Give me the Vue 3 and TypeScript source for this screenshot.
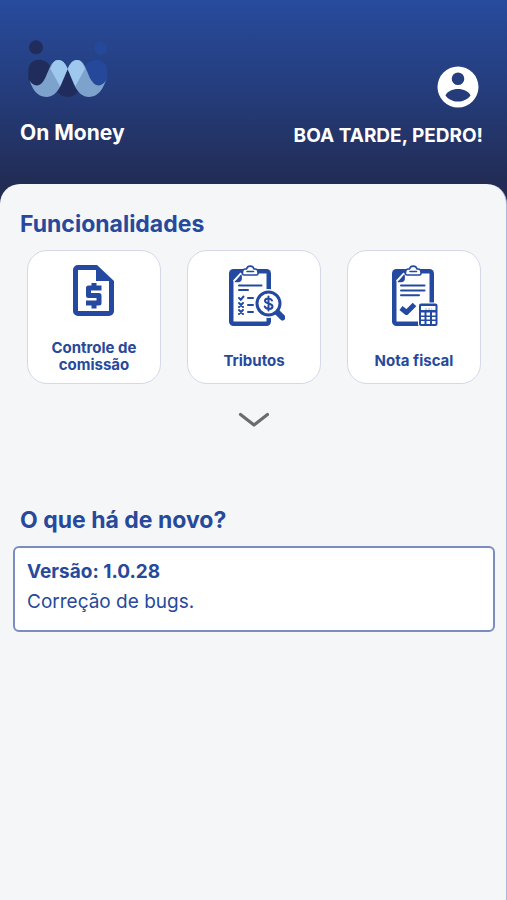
<script setup lang="ts">
interface Feature {
  id: 'commission' | 'taxes' | 'invoice'
  label: string
}

const features: Feature[] = [
  { id: 'commission', label: 'Controle de comissão' },
  { id: 'taxes', label: 'Tributos' },
  { id: 'invoice', label: 'Nota fiscal' },
]

const userName: string = 'PEDRO'
const version: string = '1.0.28'
</script>

<template>
  <div class="app">
    <header class="header">
      <div class="brand">
        <svg class="logo" viewBox="54 30 240 180" aria-hidden="true">
          <circle cx="78" cy="52" r="21" fill="#202d5c" />
          <circle cx="272" cy="54" r="20" fill="#25489a" />
          <path d="M55 150V122C55 102 68 89 87 89C108 89 121 104 130 124C122 142 104 167 83 168C68 168 60 161 55 150Z" fill="#202d5c" />
          <path d="M291 150V122C291 102 278 89 259 89C238 89 225 104 216 124C224 142 242 167 263 168C278 168 286 161 291 150Z" fill="#25489a" />
          <path d="M173 116L204 184C197 196 186 201 173 201S149 196 142 184Z" fill="#202d5c" />
          <path d="M58 151C70 171 87 172 101 152C116 130 120 90 145 90C159 90 167 103 173 117C158 150 147 201 109 201C80 201 67 176 58 151Z" fill="#7da2cb" />
          <path d="M288 151C276 171 259 172 245 152C230 130 226 90 201 90C187 90 179 103 173 117C188 150 199 201 237 201C266 201 279 176 288 151Z" fill="#7da2cb" />
          <path d="M121 116C128 100 133 90 145 90C159 90 167 103 173 117L150 169Z" fill="#9fc8ee" />
          <path d="M225 116C218 100 213 90 201 90C187 90 179 103 173 117L196 169Z" fill="#9fc8ee" />
        </svg>
        <h1 class="brand-name">On Money</h1>
      </div>
      <div class="account">
        <button class="avatar" type="button" aria-label="Perfil">
          <svg viewBox="0 0 42 42" aria-hidden="true">
            <path fill="#fff" fill-rule="evenodd" d="M21 0.5a20.5 20.5 0 1 1 0 41a20.5 20.5 0 0 1 0-41ZM21 6.500a6.300 6.300 0 1 0 0 12.600a6.300 6.300 0 0 0 0-12.600ZM8.500 29.500C11 33 15.500 35.600 21 35.600S31 33 33.500 29.500C32 25.500 26.500 23 21 23S10 25.500 8.500 29.500Z" />
          </svg>
        </button>
        <p class="greeting">BOA TARDE, {{ userName }}!</p>
      </div>
    </header>

    <main class="sheet">
      <section>
        <h2 class="title">Funcionalidades</h2>
        <div class="features">
          <button v-for="f in features" :key="f.id" class="card" type="button">
            <svg v-if="f.id === 'commission'" class="icon" viewBox="0 0 62 64" aria-hidden="true">
              <path fill="#2449a0" fill-rule="evenodd" d="M15 0H34L51 16V46A5 5 0 0 1 46 51H15A5 5 0 0 1 10 46V5A5 5 0 0 1 15 0ZM15 5V46H46V16H33V5Z" />
              <path fill="none" stroke="#2449a0" stroke-width="5" stroke-linejoin="round" d="M38.500 23H25.500V30.500H36V38H23M31 18V23M31 38V43.500" />
            </svg>
            <svg v-else class="icon" :viewBox="f.id === 'taxes' ? '0 0 62 64' : '-3 0 62 64'" aria-hidden="true">
              <rect x="6" y="4" width="42" height="57" rx="4.500" fill="#2449a0" />
              <path fill="#fff" d="M18 8.500H43.500V56.500H10.500V16Z" />
              <path fill="#2449a0" d="M12 16.500L18.500 9V13.500A3 3 0 0 1 15.500 16.500Z" />
              <path fill="none" stroke="#fff" stroke-width="1.500" d="M10.500 16L18 8" />
              <path fill="none" stroke="#2449a0" stroke-width="1.500" stroke-linecap="round" d="M12.500 16.500H15A3 3 0 0 0 18 13.500V11" />
              <path fill="#fff" stroke="#2449a0" stroke-width="1.600" stroke-linejoin="round" d="M21 10A1.500 1.500 0 0 1 19.500 8.500V7A3 3 0 0 1 22.500 4H23.500A3.900 3.900 0 0 1 31 4H32A3 3 0 0 1 35 7V8.500A1.500 1.500 0 0 1 33.500 10Z" />
              <path fill="none" stroke="#2449a0" stroke-width="1.600" stroke-linecap="round" d="M24 6.500H30.500" />
              <g v-if="f.id === 'taxes'" fill="none" stroke="#2449a0" stroke-width="2" stroke-linecap="round">
                <path d="M16 20.500H38.500M16 25H25M25 33H30M25 40H30M25 47H30" />
                <path d="M16 33L17.800 34.800L20.500 31.500M16 38L20 42M20 38L16 42M16 45L20 49M20 45L16 49" />
                <circle cx="45.500" cy="38.500" r="14.500" fill="#fff" stroke="none" />
                <path d="M54 47L59.500 52.500" stroke-width="6" />
                <circle cx="45.500" cy="38.500" r="11.500" fill="#fff" stroke-width="3" />
                <path d="M49 35.500C47.500 32.500 42 33 42 35.800C42 39.500 49.500 37.500 49.500 41.500C49.500 44.500 43.500 45 41.800 41.500M45.500 31.500V45.500" />
              </g>
              <g v-else>
                <path fill="none" stroke="#2449a0" stroke-width="2" stroke-linecap="round" d="M15 20.500H38.500M15 25.500H38.500M15 30.200H33" />
                <path fill="none" stroke="#2449a0" stroke-width="5" stroke-linejoin="round" d="M15 43L20.500 47.500L28.500 39.500" />
                <rect x="32" y="37.500" width="20" height="24.500" rx="3" fill="#fff" />
                <rect x="33" y="38.500" width="18.500" height="22.500" rx="2" fill="#2449a0" />
                <path fill="#fff" d="M35 41H49.500V45H35ZM35 47.500H38.500V50.500H35ZM40.500 47.500H44V50.500H40.500ZM46 47.500H49.500V50.500H46ZM35 52H38.500V54.500H35ZM40.500 52H44V54.500H40.500ZM46 52H49.500V54.500H46ZM35 56H38.500V59H35ZM40.500 56H44V59H40.500ZM46 56H49.500V59H46Z" />
                <path stroke="#9aabd0" d="M39 44H46" stroke-dasharray="2 1" />
              </g>
            </svg>
            <span class="label">{{ f.label }}</span>
          </button>
        </div>
        <button class="expand" type="button" aria-label="Mostrar mais">
          <svg viewBox="0 0 32 16" aria-hidden="true">
            <path d="M3.500 2.500L17 13L30.500 2.500" fill="none" stroke="#6b6c6f" stroke-width="3.200" stroke-linecap="round" stroke-linejoin="round" />
          </svg>
        </button>
      </section>

      <section class="news">
        <h2 class="title">O que há de novo?</h2>
        <article class="release">
          <h3 class="version">Versão: {{ version }}</h3>
          <p class="notes">Correção de bugs.</p>
        </article>
      </section>
    </main>
  </div>
</template>

<style>
body {
  margin: 0;
  background: #f4f6f8;
}
</style>

<style scoped>
.app {
  display: flex;
  flex-direction: column;
  min-height: 100vh;
  background: linear-gradient(#284b9d 0, #243b78 100px, #222c54 184px, #222c54 210px, #f4f6f8 210px);
  font-family: Inter, "Liberation Sans", sans-serif;
  color: #27499b;
}

h1,
h2,
h3,
p {
  margin: 0;
}

button {
  padding: 0;
  border: 0;
  background: none;
  font: inherit;
  color: inherit;
  cursor: pointer;
}

svg {
  display: block;
}

.header {
  display: flex;
  justify-content: space-between;
  padding: 40px 24px 36px 20px;
  color: #fff;
}

.logo {
  width: 80px;
  height: 60px;
  margin-left: 8px;
}

.brand-name {
  margin-top: 20px;
  font-size: 21px;
  line-height: 26px;
  font-weight: 700;
}

.account {
  display: flex;
  flex-direction: column;
  align-items: flex-end;
  padding-top: 26px;
}

.avatar {
  width: 42px;
  height: 42px;
  margin-right: 4px;
}

.greeting {
  margin-top: 16px;
  font-size: 19px;
  line-height: 24px;
  font-weight: 700;
}

.sheet {
  flex: 1;
  padding-top: 24px;
  border-right: 1px solid #a9b9d6;
  border-radius: 20px 20px 0 0;
  background: #f4f6f8;
}

.title {
  padding: 0 20px;
  font-size: 23px;
  line-height: 32px;
  font-weight: 700;
}

.features {
  display: grid;
  grid-template-columns: repeat(3, 1fr);
  gap: 26px;
  padding: 10px 25px 0 27px;
}

.card {
  display: flex;
  flex-direction: column;
  align-items: center;
  justify-content: space-between;
  min-height: 134px;
  padding: 14px 16px 10px;
  border: 1px solid #d5d8e8;
  border-radius: 20px;
  background: #fff;
}

.icon {
  width: 62px;
  height: 64px;
}

.label {
  display: flex;
  align-items: center;
  min-height: 26px;
  font-size: 15px;
  line-height: 17px;
  font-weight: 700;
}

.expand {
  display: block;
  width: 32px;
  height: 16px;
  margin: 28px auto 0;
}

.news {
  margin-top: 76px;
}

.release {
  margin: 10px 11px 0 13px;
  padding: 11px 12px 15px;
  border: 2px solid #7b8cc0;
  border-radius: 6px;
  background: #fff;
}

.version {
  font-size: 19px;
  line-height: 26px;
  font-weight: 700;
}

.notes {
  margin-top: 4px;
  font-size: 19px;
  line-height: 26px;
}
</style>
